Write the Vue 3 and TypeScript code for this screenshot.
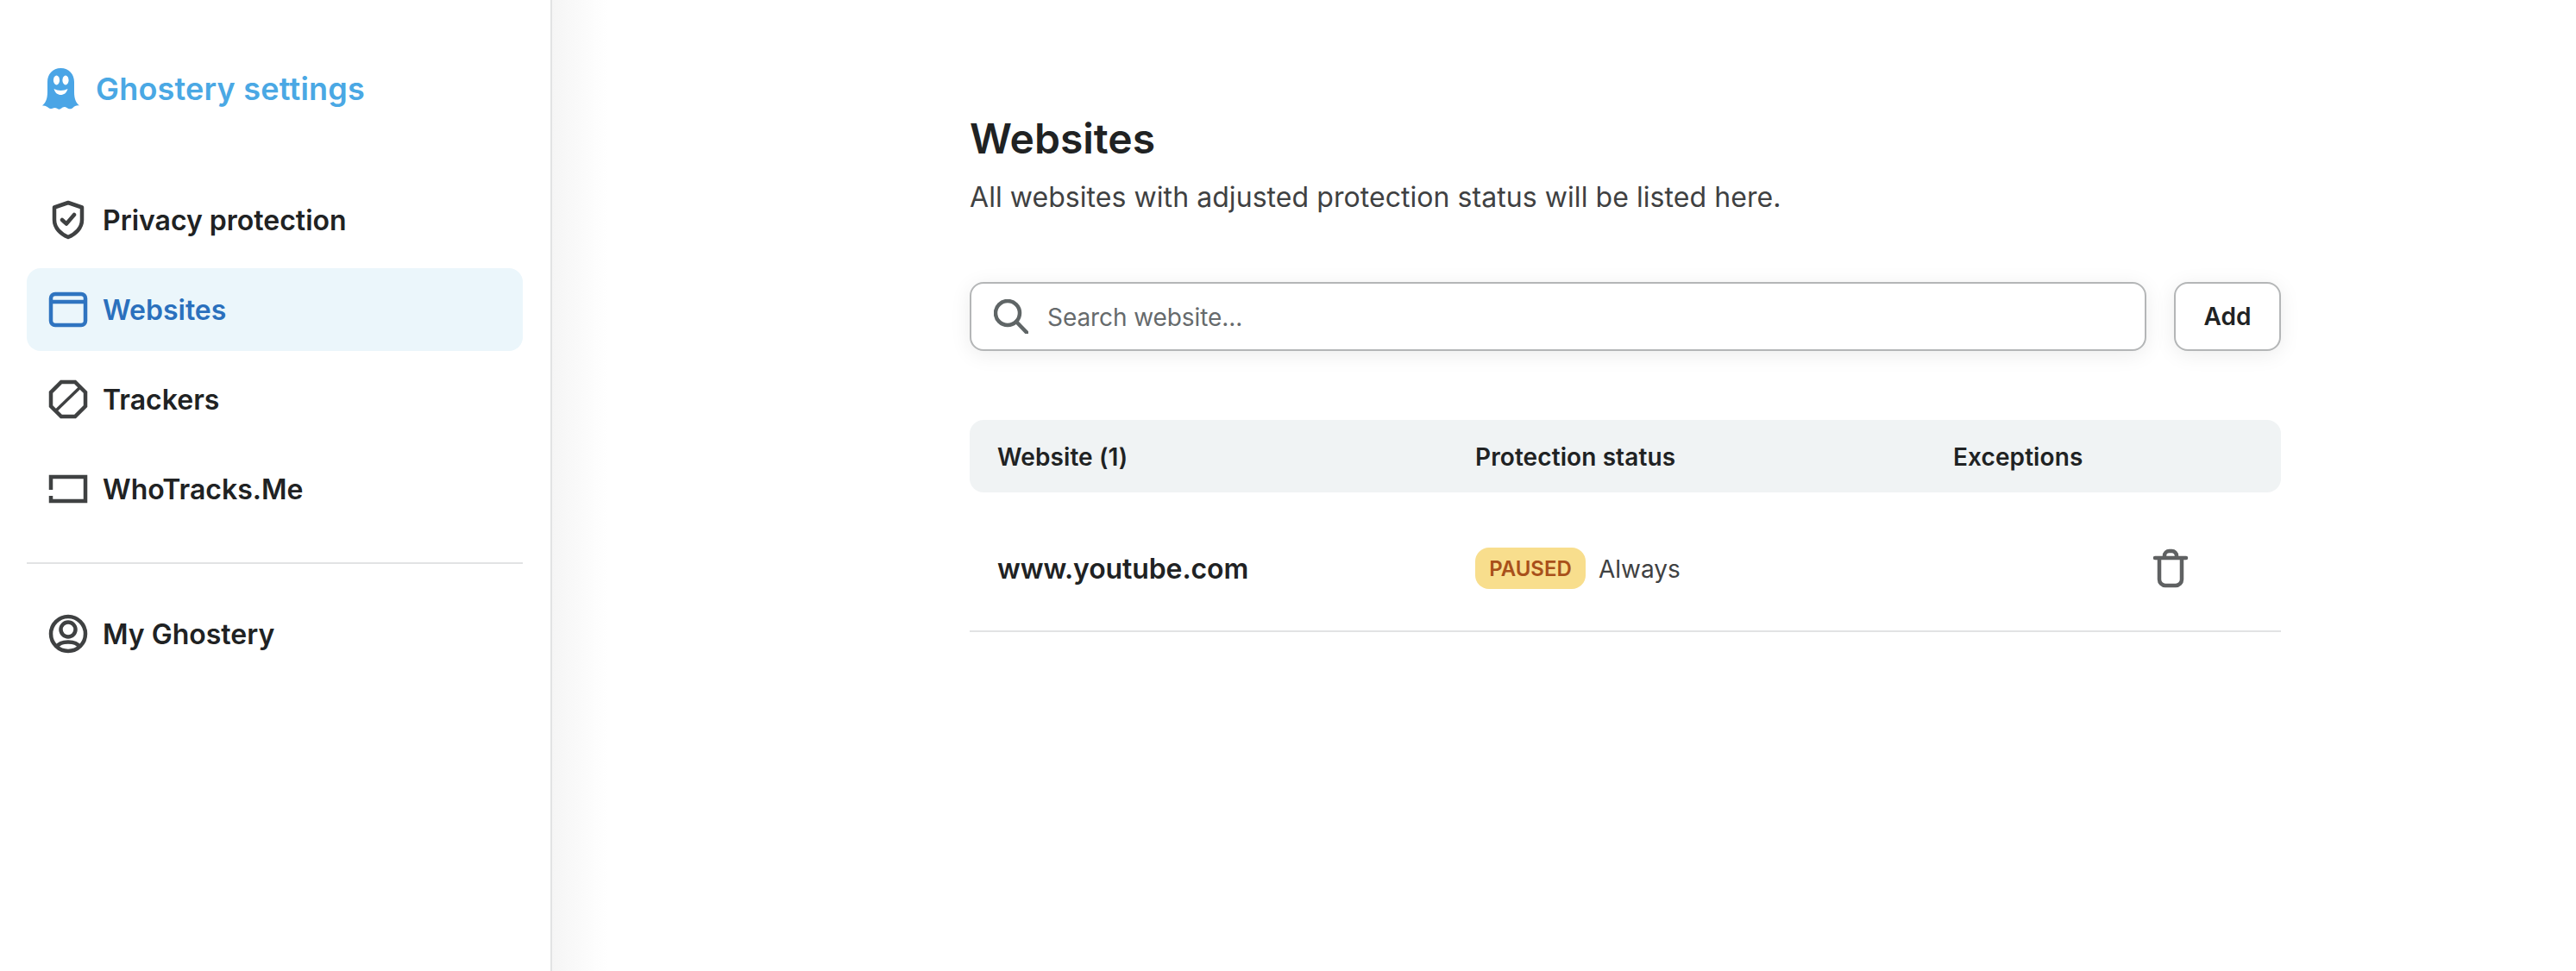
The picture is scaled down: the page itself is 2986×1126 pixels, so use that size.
<script setup lang="ts">
// Ghostery settings page: sidebar nav plus the "Websites" list
type NavIcon = 'shield' | 'window' | 'block' | 'frame';

const navItems: { label: string; icon: NavIcon; active?: boolean }[] = [
  { label: 'Privacy protection', icon: 'shield' },
  { label: 'Websites', icon: 'window', active: true },
  { label: 'Trackers', icon: 'block' },
  { label: 'WhoTracks.Me', icon: 'frame' },
];
</script>

<template>
  <div class="page">
    <aside class="sidebar">
      <div class="brand">
        <svg class="ghost" viewBox="0 0 43 49" width="43" height="49">
          <path
            fill="#4aa5e6"
            d="M21.5 0C31 0 37 7 37 16V28C37 36 39.5 40.5 43 43.5C39.5 43 37.5 44 35.5 46C33.5 48 30.5 47.5 28.5 46C26 44 24 45 21.5 47C19 49 17 46 14.5 46C12.5 46 10.5 48 8 46.5C6 45 3.5 43 0 43.5C3.5 40.5 6 36 6 28V16C6 7 12 0 21.5 0Z"
          />
          <ellipse cx="16.5" cy="14" rx="3.6" ry="5.4" fill="#fff" />
          <ellipse cx="27" cy="14" rx="3.6" ry="5.4" fill="#fff" />
          <path fill="#fff" d="M13.5 24C18 26.5 25 26.5 29.5 24C28 29 25 31 21.5 31C18 31 15 29 13.5 24Z" />
        </svg>
        <span class="brand-name">Ghostery settings</span>
      </div>

      <nav class="nav">
        <a v-for="item in navItems" :key="item.label" class="nav-item" :class="{ active: item.active }">
          <svg class="nav-icon" viewBox="0 0 48 48" width="48" height="48">
            <template v-if="item.icon === 'shield'">
              <path d="M24 4L40 9.5V24C40 33.5 32.5 40.5 24 44C15.500 40.5 8 33.5 8 24V9.5Z" stroke-linejoin="round" />
              <path d="M17 24L22 28.5L31 18" stroke-linecap="round" stroke-linejoin="round" />
            </template>
            <template v-else-if="item.icon === 'window'">
              <rect x="4" y="6" width="40" height="36" rx="5" />
              <path d="M4 15H44" />
            </template>
            <template v-else-if="item.icon === 'block'">
              <path d="M16 4H32L44 16V32L32 44H16L4 32V16Z" />
              <path d="M39 9L10 37" stroke-width="3.500" />
            </template>
            <path v-else d="M4 25V10H44V38H4V32" />
          </svg>
          <span>{{ item.label }}</span>
        </a>
        <div class="nav-divider"></div>
        <a class="nav-item">
          <svg class="nav-icon" viewBox="0 0 48 48" width="48" height="48">
            <circle cx="24" cy="24" r="20" />
            <circle cx="24" cy="19" r="8.5" />
            <path d="M11 39C13 35 17 33.5 24 33.5C31 33.5 35 35 37 39" />
          </svg>
          <span>My Ghostery</span>
        </a>
      </nav>
    </aside>

    <main class="main">
      <h1 class="title">Websites</h1>
      <p class="subtitle">All websites with adjusted protection status will be listed here.</p>

      <div class="toolbar">
        <label class="search">
          <svg viewBox="0 0 40 40" width="40" height="40" class="search-icon">
            <circle cx="16" cy="16" r="14" />
            <path d="M26 26L38.5 39" stroke-linecap="round" />
          </svg>
          <input type="text" placeholder="Search website..." />
        </label>
        <button class="add-btn" type="button">Add</button>
      </div>

      <div class="table-head table-grid">
        <div>Website (1)</div>
        <div>Protection status</div>
        <div>Exceptions</div>
      </div>
      <div class="table-row table-grid">
        <div class="site">www.youtube.com</div>
        <div class="status">
          <span class="badge">PAUSED</span>
          <span class="when">Always</span>
        </div>
        <div></div>
        <svg class="trash" viewBox="0 0 48 48" width="48" height="48">
          <path d="M6 12H42" stroke-linecap="round" />
          <path d="M11 12V37A7 7 0 0 0 18 44H30A7 7 0 0 0 37 37V12" />
          <path d="M17 12V9.5A5.5 5.5 0 0 1 22.5 4H25.5A5.5 5.5 0 0 1 31 9.5V12" />
        </svg>
      </div>
    </main>
  </div>
</template>

<style>
html,
body {
  margin: 0;
  background: #fff;
}
</style>

<style scoped>
.page {
  display: flex;
  height: 1126px;
  overflow: hidden;
  font-family: Inter, "Liberation Sans", sans-serif;
  color: #202223;
}
.sidebar {
  box-sizing: border-box;
  width: 640px;
  flex: none;
  padding: 71px 32px 0 31px;
  border-right: 2px solid #e2e3e4;
}
.brand {
  display: flex;
  align-items: center;
  height: 64px;
  padding-left: 18px;
  gap: 19px;
}
.ghost {
  flex: none;
}
.brand-name {
  font-size: 36px;
  font-weight: 600;
  letter-spacing: 0.2px;
  color: #4aa8e4;
}
.nav {
  display: flex;
  flex-direction: column;
  gap: 8px;
  margin-top: 72px;
}
.nav-item {
  display: flex;
  align-items: center;
  gap: 16px;
  height: 96px;
  padding: 0 24px;
  border-radius: 16px;
  font-size: 32px;
  font-weight: 600;
}
.nav-icon {
  flex: none;
  fill: none;
  stroke: #3f4142;
  stroke-width: 4.5;
}
.nav-item.active {
  background: #ebf6fb;
  color: #2a70bd;
}
.nav-item.active .nav-icon {
  stroke: #2f74c0;
}
.nav-divider {
  height: 2px;
  margin: 29px 0 25px;
  background: #e2e3e4;
}
.main {
  flex: 1;
  padding: 133px 0 0 484px;
  background: linear-gradient(to right, #f5f5f5, #fff 64px);
}
.title {
  margin: 0;
  font-size: 48px;
  line-height: 56px;
  font-weight: 600;
}
.subtitle {
  margin: 20px 0 0;
  font-size: 32px;
  line-height: 40px;
  letter-spacing: 0.06px;
  color: #3f4142;
}
.toolbar {
  display: flex;
  gap: 32px;
  width: 1520px;
  margin-top: 78px;
}
.search {
  box-sizing: border-box;
  display: flex;
  align-items: center;
  flex: 1;
  height: 80px;
  padding: 0 26px;
  gap: 22px;
  background: #fff;
  border: 2px solid #b4b6b7;
  border-radius: 16px;
  box-shadow: 0 4px 24px rgba(0, 0, 0, 0.08);
}
.search-icon {
  flex: none;
  fill: none;
  stroke: #5f6566;
  stroke-width: 4.5;
}
.search input {
  flex: 1;
  border: none;
  outline: none;
  padding: 2px 0 0;
  background: transparent;
  font: 400 28px Inter, "Liberation Sans", sans-serif;
  letter-spacing: -0.08px;
  color: #202223;
}
.search input::placeholder {
  color: #666a6c;
  opacity: 1;
}
.add-btn {
  box-sizing: border-box;
  width: 124px;
  height: 80px;
  padding: 0;
  background: #fff;
  border: 2px solid #b4b6b7;
  border-radius: 16px;
  box-shadow: 0 4px 24px rgba(0, 0, 0, 0.08);
  font: 600 28px Inter, "Liberation Sans", sans-serif;
  color: #202223;
}
.table-grid {
  display: grid;
  grid-template-columns: 554px 554px 228px 48px;
  align-items: center;
  box-sizing: border-box;
  width: 1520px;
  padding: 0 32px;
}
.table-head {
  height: 84px;
  padding-top: 2px;
  margin-top: 80px;
  background: #f0f3f4;
  border-radius: 16px;
  font-size: 28px;
  font-weight: 600;
  letter-spacing: 0.1px;
}
.table-row {
  height: 162px;
  padding-top: 16px;
  border-bottom: 2px solid #e2e3e4;
}
.site {
  font-size: 32px;
  font-weight: 600;
  letter-spacing: -0.1px;
}
.status {
  display: flex;
  align-items: center;
  gap: 15px;
}
.badge {
  box-sizing: border-box;
  display: flex;
  align-items: center;
  justify-content: center;
  width: 128px;
  height: 48px;
  border-radius: 16px;
  background: #f8de8d;
  color: #a8501a;
  font-size: 24px;
  font-weight: 600;
}
.when {
  padding-top: 2px;
  font-size: 28px;
  color: #3f4142;
}
.trash {
  fill: none;
  stroke: #5f6162;
  stroke-width: 4.5;
}
</style>
